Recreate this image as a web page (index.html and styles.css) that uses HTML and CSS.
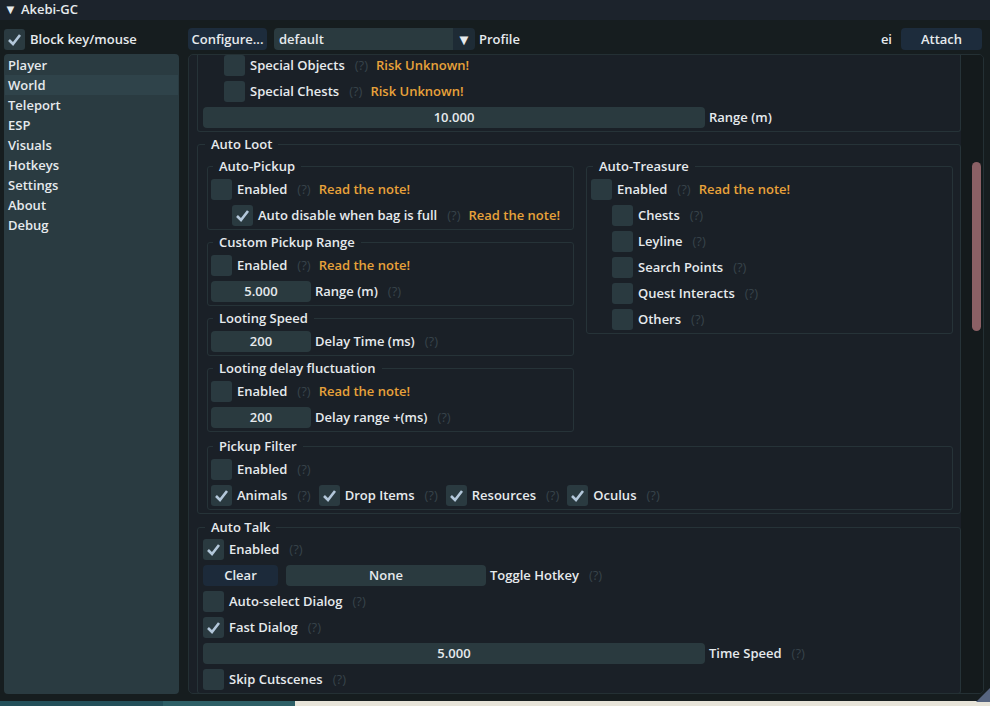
FILE: index.html
```html
<!DOCTYPE html>
<html lang="en">
<head>
    <meta charset="UTF-8">
    <title>Akebi-GC</title>
    <link rel="stylesheet" href="styles.css">
</head>
<body>
    <div class="window">
        <div class="titlebar"><span class="title-arrow">▼</span>Akebi-GC</div>

        <div class="toolbar">
            <div class="toolbar-left">
                <label class="check"><span class="box on"><svg viewBox="0 0 21 21"><path d="M5 11 L9 15 L16 6"/></svg></span>Block key/mouse</label>
            </div>
            <button class="btn configure">Configure...</button>
            <div class="combo">
                <span class="combo-value">default</span>
                <span class="combo-arrow">▼</span>
            </div>
            <span class="profile">Profile</span>
            <span class="spacer"></span>
            <span class="user">ei</span>
            <button class="btn attach">Attach</button>
        </div>

        <div class="body">
            <ul class="sidebar">
                <li>Player</li>
                <li class="selected">World</li>
                <li>Teleport</li>
                <li>ESP</li>
                <li>Visuals</li>
                <li>Hotkeys</li>
                <li>Settings</li>
                <li>About</li>
                <li>Debug</li>
            </ul>

            <div class="panel">
                <div class="scroll">
                    <!-- group scrolled past its title -->
                    <div class="group-cut stack">
                        <div class="row indent">
                            <label class="check"><span class="box"></span>Special Objects</label>
                            <span class="help">(?)</span>
                            <span class="warn">Risk Unknown!</span>
                        </div>
                        <div class="row indent">
                            <label class="check"><span class="box"></span>Special Chests</label>
                            <span class="help">(?)</span>
                            <span class="warn">Risk Unknown!</span>
                        </div>
                        <div class="row">
                            <div class="slider wide">10.000</div>
                            <span class="slider-label">Range (m)</span>
                        </div>
                    </div>

                    <fieldset class="group outer loot">
                        <legend>Auto Loot</legend>
                        <div class="loot-cols">
                            <div class="loot-col">
                                <fieldset class="group inner">
                                    <legend>Auto-Pickup</legend>
                                    <div class="stack">
                                        <div class="row">
                                            <label class="check"><span class="box"></span>Enabled</label>
                                            <span class="help">(?)</span>
                                            <span class="warn">Read the note!</span>
                                        </div>
                                        <div class="row indent">
                                            <label class="check"><span class="box on"><svg viewBox="0 0 21 21"><path d="M5 11 L9 15 L16 6"/></svg></span>Auto disable when bag is full</label>
                                            <span class="help">(?)</span>
                                            <span class="warn">Read the note!</span>
                                        </div>
                                    </div>
                                </fieldset>

                                <fieldset class="group inner">
                                    <legend>Custom Pickup Range</legend>
                                    <div class="stack">
                                        <div class="row">
                                            <label class="check"><span class="box"></span>Enabled</label>
                                            <span class="help">(?)</span>
                                            <span class="warn">Read the note!</span>
                                        </div>
                                        <div class="row">
                                            <div class="slider short">5.000</div>
                                            <span class="slider-label">Range (m)</span>
                                            <span class="help">(?)</span>
                                        </div>
                                    </div>
                                </fieldset>

                                <fieldset class="group inner">
                                    <legend>Looting Speed</legend>
                                    <div class="stack">
                                        <div class="row">
                                            <div class="slider short">200</div>
                                            <span class="slider-label">Delay Time (ms)</span>
                                            <span class="help">(?)</span>
                                        </div>
                                    </div>
                                </fieldset>

                                <fieldset class="group inner">
                                    <legend>Looting delay fluctuation</legend>
                                    <div class="stack">
                                        <div class="row">
                                            <label class="check"><span class="box"></span>Enabled</label>
                                            <span class="help">(?)</span>
                                            <span class="warn">Read the note!</span>
                                        </div>
                                        <div class="row">
                                            <div class="slider short">200</div>
                                            <span class="slider-label">Delay range +(ms)</span>
                                            <span class="help">(?)</span>
                                        </div>
                                    </div>
                                </fieldset>
                            </div>

                            <div class="loot-col">
                                <fieldset class="group inner treasure">
                                    <legend>Auto-Treasure</legend>
                                    <div class="stack">
                                        <div class="row">
                                            <label class="check"><span class="box"></span>Enabled</label>
                                            <span class="help">(?)</span>
                                            <span class="warn">Read the note!</span>
                                        </div>
                                        <div class="row indent">
                                            <label class="check"><span class="box"></span>Chests</label>
                                            <span class="help">(?)</span>
                                        </div>
                                        <div class="row indent">
                                            <label class="check"><span class="box"></span>Leyline</label>
                                            <span class="help">(?)</span>
                                        </div>
                                        <div class="row indent">
                                            <label class="check"><span class="box"></span>Search Points</label>
                                            <span class="help">(?)</span>
                                        </div>
                                        <div class="row indent">
                                            <label class="check"><span class="box"></span>Quest Interacts</label>
                                            <span class="help">(?)</span>
                                        </div>
                                        <div class="row indent">
                                            <label class="check"><span class="box"></span>Others</label>
                                            <span class="help">(?)</span>
                                        </div>
                                    </div>
                                </fieldset>
                            </div>
                        </div>

                        <fieldset class="group inner filter">
                            <legend>Pickup Filter</legend>
                            <div class="stack">
                                <div class="row">
                                    <label class="check"><span class="box"></span>Enabled</label>
                                    <span class="help">(?)</span>
                                </div>
                                <div class="row">
                                    <label class="check"><span class="box on"><svg viewBox="0 0 21 21"><path d="M5 11 L9 15 L16 6"/></svg></span>Animals</label>
                                    <span class="help">(?)</span>
                                    <label class="check"><span class="box on"><svg viewBox="0 0 21 21"><path d="M5 11 L9 15 L16 6"/></svg></span>Drop Items</label>
                                    <span class="help">(?)</span>
                                    <label class="check"><span class="box on"><svg viewBox="0 0 21 21"><path d="M5 11 L9 15 L16 6"/></svg></span>Resources</label>
                                    <span class="help">(?)</span>
                                    <label class="check"><span class="box on"><svg viewBox="0 0 21 21"><path d="M5 11 L9 15 L16 6"/></svg></span>Oculus</label>
                                    <span class="help">(?)</span>
                                </div>
                            </div>
                        </fieldset>
                    </fieldset>

                    <fieldset class="group outer talk">
                        <legend>Auto Talk</legend>
                        <div class="stack">
                            <div class="row">
                                <label class="check"><span class="box on"><svg viewBox="0 0 21 21"><path d="M5 11 L9 15 L16 6"/></svg></span>Enabled</label>
                                <span class="help">(?)</span>
                            </div>
                            <div class="row">
                                <button class="btn clear">Clear</button>
                                <div class="slider hotkey">None</div>
                                <span class="slider-label">Toggle Hotkey</span>
                                <span class="help">(?)</span>
                            </div>
                            <div class="row">
                                <label class="check"><span class="box"></span>Auto-select Dialog</label>
                                <span class="help">(?)</span>
                            </div>
                            <div class="row">
                                <label class="check"><span class="box on"><svg viewBox="0 0 21 21"><path d="M5 11 L9 15 L16 6"/></svg></span>Fast Dialog</label>
                                <span class="help">(?)</span>
                            </div>
                            <div class="row">
                                <div class="slider wide">5.000</div>
                                <span class="slider-label">Time Speed</span>
                                <span class="help">(?)</span>
                            </div>
                            <div class="row">
                                <label class="check"><span class="box"></span>Skip Cutscenes</label>
                                <span class="help">(?)</span>
                            </div>
                        </div>
                    </fieldset>
                </div>

                <div class="scrollbar"><div class="thumb"></div></div>
            </div>
        </div>
    </div>

    <div class="game-strip"></div>
    <div class="resize-grip"></div>
</body>
</html>
```

FILE: styles.css
```css
/* Base */
* {
    margin: 0;
    padding: 0;
    box-sizing: border-box;
}

body {
    position: relative;
    width: 990px;
    height: 706px;
    overflow: hidden;
    background: #161d1f;
    color: #e6eaed;
    font-family: 'Open Sans', 'Noto Sans', sans-serif;
    font-weight: 600;
    font-size: 13px;
    line-height: 21px;
}

button {
    font: inherit;
    color: inherit;
    border: none;
}

/* Window */
.window {
    height: 701px;
    display: flex;
    flex-direction: column;
}

.titlebar {
    height: 20px;
    line-height: 19px;
    padding-left: 4px;
    background: #1c232c;
    display: flex;
    gap: 4px;
}

.title-arrow {
    font-size: 13px;
}

/* Top toolbar */
.toolbar {
    height: 34px;
    padding: 8px 8px 4px 4px;
    display: flex;
    align-items: center;
}

.toolbar-left {
    width: 184px;
}

.btn {
    height: 22px;
    border-radius: 4px;
    background: #1d2c3c;
    text-align: center;
}

.configure {
    width: 79px;
}

.combo {
    display: flex;
    margin-left: 7px;
    height: 22px;
}

.combo-value {
    width: 179px;
    padding-left: 5px;
    background: #2a3a3f;
    border-radius: 4px 0 0 4px;
    line-height: 22px;
}

.combo-arrow {
    width: 22px;
    background: #1e2b35;
    border-radius: 0 4px 4px 0;
    text-align: center;
    font-size: 15px;
    line-height: 22px;
}

.profile {
    margin-left: 4px;
}

.spacer {
    flex: 1;
}

.user {
    margin-right: 9px;
}

.attach {
    width: 81px;
}

/* Body */
.body {
    height: 640px;
    padding-left: 4px;
    display: flex;
    gap: 9px;
}

.sidebar {
    width: 175px;
    list-style: none;
    background: #2a3b41;
    border-radius: 4px;
    padding-top: 1px;
}

.sidebar li {
    height: 20px;
    line-height: 20px;
    padding-left: 3px;
    margin: 0 1px;
}

.sidebar li.selected {
    background: #2f434a;
}

/* Main panel */
.panel {
    width: 796px;
    display: flex;
    background: #1a2027;
    border: 1px solid #243034;
    border-radius: 5px;
    overflow: hidden;
}

.scroll {
    flex: 1;
    padding: 0 1px 0 8px;
    display: flex;
    flex-direction: column;
    overflow: hidden;
}

.scrollbar {
    width: 22px;
    background: #141a1c;
    padding: 107px 1px 0 11px;
}

.thumb {
    width: 9px;
    height: 169px;
    border-radius: 5px;
    background: #8b6065;
}

/* Widgets */
.stack {
    display: flex;
    flex-direction: column;
    gap: 5px;
}

.row {
    display: flex;
    align-items: center;
    gap: 8px;
    height: 21px;
    white-space: nowrap;
}

.row.indent {
    margin-left: 21px;
}

.check {
    display: flex;
    align-items: center;
    gap: 5px;
}

.box {
    width: 21px;
    height: 21px;
    border-radius: 3px;
    background: #2a3a40;
}

.box svg {
    display: block;
    width: 21px;
    height: 21px;
}

.box svg path {
    fill: none;
    stroke: #b3c7da;
    stroke-width: 2.6;
}

.help {
    color: #37434a;
    font-weight: 400;
    margin-left: 2px;
}

.warn {
    color: #e8a23a;
}

.slider {
    height: 21px;
    border-radius: 4px;
    background: #2a3a3f;
    text-align: center;
}

.slider.wide {
    width: 502px;
}

.slider.short {
    width: 100px;
}

.slider.hotkey {
    width: 200px;
}

.slider-label {
    margin-left: -4px;
}

.clear {
    width: 75px;
    height: 21px;
    background: #1c2a3a;
}

/* Group panels */
.group-cut {
    width: 764px;
    border: 1px solid #263338;
    border-top: none;
    border-radius: 0 0 3px 3px;
    padding: 0 5px 3px 5px;
}

.group {
    border: 1px solid #263338;
    border-radius: 3px;
    min-inline-size: 0;
}

.group legend {
    line-height: 16px;
    padding: 0 6px;
    margin-left: 2px;
}

.outer {
    width: 764px;
}

.loot > legend {
    margin-left: -2px;
}

.loot {
    margin-top: 4px;
    padding: 6px 7px 3px 9px;
}

.loot-cols {
    display: flex;
    gap: 12px;
    align-items: flex-start;
}

.loot-col {
    width: 367px;
    display: flex;
    flex-direction: column;
    gap: 4px;
}

.inner {
    padding: 5px 4px 3px 3px;
}

.treasure {
    padding-left: 4px;
}

.filter {
    margin-top: 6px;
}

.talk {
    margin-top: 5px;
    padding: 4px 5px 3px 5px;
}

/* Game behind the overlay */
.game-strip {
    height: 5px;
    background: linear-gradient(to right, #23505a 0, #23505a 163px, #2d5f66 163px, #2d5f66 295px, #e7e4d9 295px);
}

.resize-grip {
    position: absolute;
    right: 0;
    bottom: 4px;
    width: 14px;
    height: 14px;
    background: #56647f;
    clip-path: polygon(100% 0, 100% 100%, 0 100%);
}
```
